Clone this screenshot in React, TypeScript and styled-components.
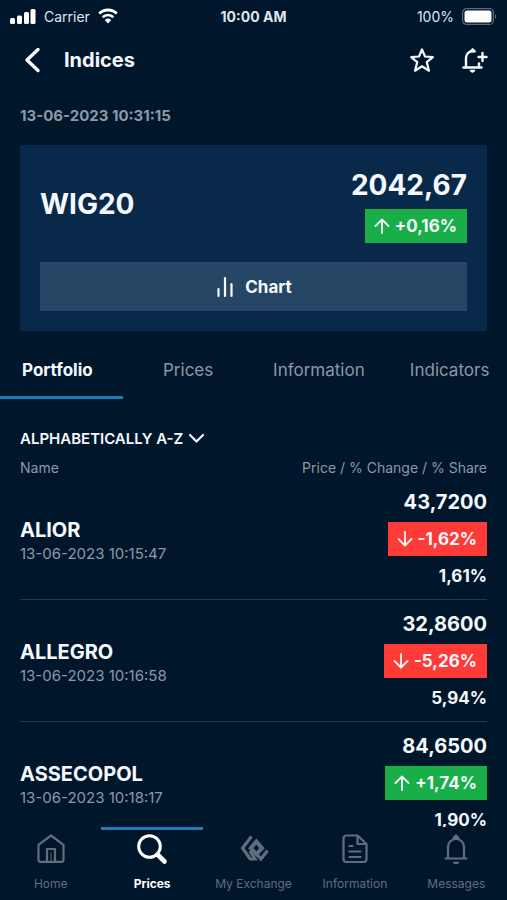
import React, { useState } from "react";
import styled, { createGlobalStyle } from "styled-components";

const GlobalStyle = createGlobalStyle`
  :root {
    --color-bg: #00172b;
    --color-card: #08294a;
    --color-button: #264665;
    --color-line: #22384e;
    --color-blue: #1f7ab8;
    --color-green: #1aae48;
    --color-red: #ff3b37;
    --color-white: #f5f9fd;
    --color-gray: #8d98a4;
    --color-nav: #5f6e7d;
  }
  * {
    box-sizing: border-box;
  }
  body {
    margin: 0;
    background-color: var(--color-bg);
    color: var(--color-white);
    font-family: Inter, "Liberation Sans", sans-serif;
  }
  button, select {
    font: inherit;
    color: inherit;
    border: none;
    padding: 0;
    background: none;
    cursor: pointer;
  }
`;
const Screen = styled.div`
  height: 100vh;
  display: flex;
  flex-direction: column;
  overflow: hidden;
`;
const StatusBar = styled.div`
  display: grid;
  grid-template-columns: 1fr auto 1fr;
  align-items: center;
  height: 32px;
  padding: 0 10px;
  font-size: 14px;
  color: #dfe6ed;
`;
const StatusGroup = styled.div<{ $end?: boolean }>`
  display: flex;
  align-items: center;
  justify-content: ${({ $end }) => ($end ? "flex-end" : "flex-start")};
  gap: 8px;
`;
const Clock = styled.time`
  font-weight: 700;
`;
const Header = styled.header`
  display: flex;
  align-items: center;
  height: 56px;
  padding: 0 19px 0 20px;
`;
const Title = styled.h1`
  flex-grow: 1;
  margin: 0 0 0 20px;
  font-size: 20px;
  font-weight: 700;
`;
const IconButton = styled.button`
  display: flex;
  & + & {
    margin-left: 24px;
  }
`;
const Content = styled.main`
  flex: 1;
  min-height: 0;
  overflow-x: hidden;
  overflow-y: auto;
  scrollbar-width: none;
`;
const Updated = styled.time`
  display: block;
  padding: 16px 20px 0;
  font-size: 15px;
  line-height: 24px;
  font-weight: 700;
  color: var(--color-gray);
`;
const Card = styled.section`
  margin: 17px 20px 0;
  padding: 20px;
  background-color: var(--color-card);
`;
const CardTop = styled.div`
  display: flex;
  justify-content: space-between;
  align-items: center;
`;
const IndexName = styled.h2`
  margin: 0;
  font-size: 28px;
  font-weight: 700;
`;
const Quote = styled.div`
  display: flex;
  flex-direction: column;
  align-items: flex-end;
  gap: 4px;
`;
const IndexValue = styled.div`
  font-size: 28px;
  line-height: 40px;
  font-weight: 700;
`;
const Badge = styled.div<{ $up: boolean }>`
  display: flex;
  align-items: center;
  gap: 4px;
  height: 34px;
  padding: 0 10px 0 8px;
  font-size: 17px;
  font-weight: 700;
  background-color: ${({ $up }) =>
    $up ? "var(--color-green)" : "var(--color-red)"};
`;
const ChartButton = styled.button`
  width: 100%;
  height: 49px;
  margin-top: 19px;
  display: flex;
  justify-content: center;
  align-items: center;
  gap: 10px;
  font-size: 17px;
  font-weight: 700;
  background-color: var(--color-button);
`;
const Tabs = styled.div`
  display: flex;
  margin: 11px -8px 0;
`;
const Tab = styled.button<{ $active: boolean }>`
  flex: 1 1 0;
  height: 57px;
  padding-top: 2px;
  font-size: 17px;
  font-weight: ${({ $active }) => ($active ? 700 : 400)};
  color: ${({ $active }) =>
    $active ? "var(--color-white)" : "var(--color-gray)"};
  border-bottom: 3px solid
    ${({ $active }) => ($active ? "var(--color-blue)" : "transparent")};
`;
const SortLabel = styled.label`
  display: flex;
  align-items: center;
  gap: 4px;
  width: max-content;
  margin: 27px 20px 0;
  height: 24px;
  cursor: pointer;
`;
const SortSelect = styled.select`
  appearance: none;
  field-sizing: content;
  outline: none;
  font-size: 15px;
  font-weight: 600;
  text-transform: uppercase;
  option {
    color: #000;
  }
`;
const ListHeader = styled.div`
  display: flex;
  justify-content: space-between;
  padding: 8px 20px 0;
  font-size: 14px;
  line-height: 20px;
  color: var(--color-gray);
`;
const List = styled.ul`
  margin: 0;
  padding: 0 20px;
  list-style: none;
`;
const Row = styled.li`
  display: flex;
  justify-content: space-between;
  align-items: center;
  padding: 12px 0 11px;
  border-bottom: 1px solid var(--color-line);
`;
const Stock = styled.div`
  padding-top: 5px;
`;
const StockName = styled.div`
  font-size: 20px;
  line-height: 24px;
  font-weight: 700;
`;
const StockTime = styled.time`
  display: block;
  font-size: 15px;
  line-height: 24px;
  color: var(--color-gray);
`;
const StockValues = styled.div`
  display: flex;
  flex-direction: column;
  align-items: flex-end;
  gap: 8px;
`;
const Price = styled.div`
  font-size: 20px;
  line-height: 24px;
  font-weight: 700;
`;
const Share = styled.div`
  font-size: 17px;
  line-height: 24px;
  font-weight: 700;
`;
const BottomNav = styled.nav`
  display: flex;
  background-color: var(--color-bg);
`;
const NavLink = styled.a<{ $active: boolean }>`
  flex: 1 1 0;
  display: flex;
  flex-direction: column;
  align-items: center;
  gap: 11px;
  height: 73px;
  padding-top: 3px;
  border-top: 3px solid
    ${({ $active }) => ($active ? "var(--color-blue)" : "transparent")};
  font-size: 12px;
  line-height: 16px;
  font-weight: ${({ $active }) => ($active ? 700 : 400)};
  color: ${({ $active }) => ($active ? "#fff" : "var(--color-nav)")};
  text-decoration: none;
`;

const stroke = {
  fill: "none",
  stroke: "currentColor",
  strokeLinecap: "round" as const,
  strokeLinejoin: "round" as const,
};

const Signal = () => (
  <svg width="26" height="16" viewBox="0 0 26 16" fill="#fff">
    <rect x="0" y="10" width="5" height="6" rx="1.5" />
    <rect x="7" y="7.5" width="5" height="8.5" rx="1.5" />
    <rect x="14" y="4" width="5" height="12" rx="1.5" />
    <rect x="20.5" y="1" width="5" height="15" rx="1.5" />
  </svg>
);
const Wifi = () => (
  <svg width="20" height="16" viewBox="0 0 20 16" fill="none" stroke="#fff">
    <path d="M1.2 5.6a12.6 12.6 0 0 1 17.6 0" strokeWidth="2.8" />
    <path d="M4.6 9.2a7.8 7.8 0 0 1 10.8 0" strokeWidth="2.6" />
    <path d="M10 15.4 6.8 12a4.8 4.8 0 0 1 6.4 0Z" fill="#fff" stroke="none" />
  </svg>
);
const Battery = () => (
  <svg width="35" height="17" viewBox="0 0 35 17">
    <rect x=".6" y=".6" width="30.8" height="15.8" rx="4" fill="none" stroke="#5b6b7a" strokeWidth="1.2" />
    <rect x="2.5" y="2.5" width="27" height="12" rx="2.5" fill="#fff" />
    <path d="M33 6v5c1.7-.8 1.7-4.2 0-5Z" fill="#5b6b7a" />
  </svg>
);
const Back = () => (
  <svg width="24" height="28" viewBox="0 0 24 28" {...stroke} strokeWidth="3.4">
    <path d="M18 3.5 7 14l11 10.5" />
  </svg>
);
const Star = () => (
  <svg width="28" height="28" viewBox="0 0 28 28" {...stroke} strokeWidth="2.2">
    <path d="m14 3.5 3 7 7.8.6-6 5.1 2.2 8.5-7-4.4-7 4.4 2.2-8.5-6-5.1 7.8-.6Z" />
  </svg>
);
const BellPlus = () => (
  <svg width="28" height="28" viewBox="0 0 28 28" {...stroke} strokeWidth="2.4">
    <path d="M3.5 21.5h18" />
    <path d="M6 21v-9a7 7 0 0 1 6.5-7h1.5" />
    <path d="M10.5 5.5 12.5 3l2.5 2.5Z" strokeWidth="1.8" />
    <path d="M19 17.5v3.5" />
    <path d="M10.5 24.5h4L12.5 26Z" strokeWidth="1.6" />
    <path d="M18.5 11h8M22.5 7v8" />
  </svg>
);
const Bars = () => (
  <svg width="20" height="22" viewBox="0 0 20 22" {...stroke} strokeWidth="2.2">
    <path d="M3.5 13v7M10 2v18M16.5 8v12" />
  </svg>
);
const Arrow = ({ up }: { up: boolean }) => (
  <svg width="18" height="18" viewBox="0 0 18 18" {...stroke} strokeWidth="1.8">
    <path d={up ? "M9 16V3M2.5 9 9 2.5 15.5 9" : "M9 2v13M2.5 9 9 15.5 15.5 9"} />
  </svg>
);
const Chevron = () => (
  <svg width="18" height="12" viewBox="0 0 18 12" {...stroke} strokeWidth="2.2">
    <path d="m3 3 6.5 6.5L16 3" />
  </svg>
);
const HomeIcon = () => (
  <svg width="32" height="32" viewBox="0 0 32 32" {...stroke} strokeWidth="2.2">
    <path d="M3.5 11.8 16 2.5l12.500 9.300v15a2 2 0 0 1-2 2h-21a2 2 0 0 1-2-2Z" />
    <path d="M12 28.5V16h8v12.5" />
    <path d="M16 20v8" strokeWidth="1" />
  </svg>
);
const SearchIcon = () => (
  <svg width="32" height="32" viewBox="0 0 32 32" {...stroke}>
    <circle cx="13.5" cy="13.5" r="10.8" strokeWidth="3" />
    <path d="m21.5 21.5 7 7" strokeWidth="4.6" />
  </svg>
);
const ExchangeIcon = () => (
  <svg width="32" height="32" viewBox="0 0 32 32" fill="none" stroke="currentColor" strokeWidth="3.2">
    <path d="M13.5 3.5 4.5 15l7.700 11H17l-5-8" />
    <path d="M18.300 8.500 24 15.200l-5.500 6-5.800-6Z" strokeWidth="4" />
    <path d="m18 20.500 5 5.500 6.500-8.500" />
  </svg>
);
const DocumentIcon = () => (
  <svg width="32" height="32" viewBox="0 0 32 32" {...stroke} strokeWidth="2.2">
    <path d="M18.5 2.5h-11a3 3 0 0 0-3 3v20.500a3 3 0 0 0 3 3h17a3 3 0 0 0 3-3V11Z" />
    <path d="M18.5 3v8h8.5M10.5 13h3M10.5 18.5h11M10.5 24h11" />
  </svg>
);
const BellIcon = () => (
  <svg width="32" height="32" viewBox="0 0 32 32" {...stroke} strokeWidth="2.2">
    <path d="M5.5 25.5h21M8 25v-11a8 8 0 0 1 16 0v11" />
    <path d="m13.5 5 2.5-2.5L18.5 5Z" />
    <path d="M13.5 29.5h5L16 30.5Z" strokeWidth="1.4" />
  </svg>
);

const tabs = ["Portfolio", "Prices", "Information", "Indicators"];
const navItems = [
  { label: "Home", icon: <HomeIcon /> },
  { label: "Prices", icon: <SearchIcon /> },
  { label: "My Exchange", icon: <ExchangeIcon /> },
  { label: "Information", icon: <DocumentIcon /> },
  { label: "Messages", icon: <BellIcon /> },
];
const stocks = [
  { name: "ALIOR", time: "13-06-2023 10:15:47", price: "43,7200", change: "-1,62%", share: "1,61%" },
  { name: "ALLEGRO", time: "13-06-2023 10:16:58", price: "32,8600", change: "-5,26%", share: "5,94%" },
  { name: "ASSECOPOL", time: "13-06-2023 10:18:17", price: "84,6500", change: "+1,74%", share: "1,90%" },
];

function Change({ value }: { value: string }) {
  const up = value.startsWith("+");
  return (
    <Badge $up={up}>
      <Arrow up={up} />
      {value}
    </Badge>
  );
}

export default function App() {
  const [tab, setTab] = useState("Portfolio");
  const [page, setPage] = useState("Prices");

  const handleNav = (event: React.MouseEvent, label: string) => {
    event.preventDefault();
    setPage(label);
  };

  return (
    <Screen>
      <GlobalStyle />
      <StatusBar>
        <StatusGroup>
          <Signal />
          Carrier
          <Wifi />
        </StatusGroup>
        <Clock>10:00 AM</Clock>
        <StatusGroup $end>
          100%
          <Battery />
        </StatusGroup>
      </StatusBar>
      <Header>
        <IconButton aria-label="Back">
          <Back />
        </IconButton>
        <Title>Indices</Title>
        <IconButton aria-label="Add to favourites">
          <Star />
        </IconButton>
        <IconButton aria-label="Add alert">
          <BellPlus />
        </IconButton>
      </Header>
      <Content>
        <Updated>13-06-2023 10:31:15</Updated>
        <Card>
          <CardTop>
            <IndexName>WIG20</IndexName>
            <Quote>
              <IndexValue>2042,67</IndexValue>
              <Change value="+0,16%" />
            </Quote>
          </CardTop>
          <ChartButton>
            <Bars />
            Chart
          </ChartButton>
        </Card>
        <Tabs role="tablist">
          {tabs.map((item) => (
            <Tab
              key={item}
              role="tab"
              aria-selected={item === tab}
              $active={item === tab}
              onClick={() => setTab(item)}
            >
              {item}
            </Tab>
          ))}
        </Tabs>
        <SortLabel>
          <SortSelect aria-label="Sort order">
            <option>Alphabetically A-Z</option>
            <option>Alphabetically Z-A</option>
          </SortSelect>
          <Chevron />
        </SortLabel>
        <ListHeader>
          <span>Name</span>
          <span>Price / % Change / % Share</span>
        </ListHeader>
        <List>
          {stocks.map((stock) => (
            <Row key={stock.name}>
              <Stock>
                <StockName>{stock.name}</StockName>
                <StockTime>{stock.time}</StockTime>
              </Stock>
              <StockValues>
                <Price>{stock.price}</Price>
                <Change value={stock.change} />
                <Share>{stock.share}</Share>
              </StockValues>
            </Row>
          ))}
        </List>
      </Content>
      <BottomNav>
        {navItems.map(({ label, icon }) => (
          <NavLink
            key={label}
            href="#"
            $active={label === page}
            onClick={(event) => handleNav(event, label)}
          >
            {icon}
            {label}
          </NavLink>
        ))}
      </BottomNav>
    </Screen>
  );
}
